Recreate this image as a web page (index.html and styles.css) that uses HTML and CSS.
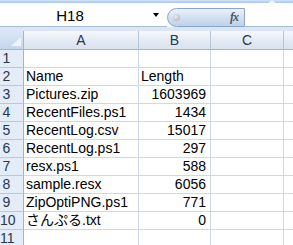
FILE: index.html
```html
<!DOCTYPE html>
<html>
<head>
<meta charset="utf-8">
<link rel="stylesheet" href="styles.css">
</head>
<body>
<div class="app">
  <div class="topband"><span class="notch"></span></div>
  <div class="fbar">
    <div class="namebox">
      <span class="nb-text">H18</span>
      <span class="nb-arrow"></span>
    </div>
    <div class="pill">
      <span class="knob"></span>
      <span class="fx">fx</span>
    </div>
    <div class="finput"></div>
  </div>
  <div class="gap"></div>
  <div class="sheet">
    <div class="corner"><span class="tri"></span></div>
    <div class="colhdr">A</div>
    <div class="colhdr">B</div>
    <div class="colhdr">C</div>
    <div class="colhdr last"></div>

    <div class="rowhdr">1</div><div class="cell"></div><div class="cell"></div><div class="cell"></div><div class="cell last"></div>
    <div class="rowhdr">2</div><div class="cell">Name</div><div class="cell">Length</div><div class="cell"></div><div class="cell last"></div>
    <div class="rowhdr">3</div><div class="cell">Pictures.zip</div><div class="cell num">1603969</div><div class="cell"></div><div class="cell last"></div>
    <div class="rowhdr">4</div><div class="cell">RecentFiles.ps1</div><div class="cell num">1434</div><div class="cell"></div><div class="cell last"></div>
    <div class="rowhdr">5</div><div class="cell">RecentLog.csv</div><div class="cell num">15017</div><div class="cell"></div><div class="cell last"></div>
    <div class="rowhdr">6</div><div class="cell">RecentLog.ps1</div><div class="cell num">297</div><div class="cell"></div><div class="cell last"></div>
    <div class="rowhdr">7</div><div class="cell">resx.ps1</div><div class="cell num">588</div><div class="cell"></div><div class="cell last"></div>
    <div class="rowhdr">8</div><div class="cell">sample.resx</div><div class="cell num">6056</div><div class="cell"></div><div class="cell last"></div>
    <div class="rowhdr">9</div><div class="cell">ZipOptiPNG.ps1</div><div class="cell num">771</div><div class="cell"></div><div class="cell last"></div>
    <div class="rowhdr">10</div><div class="cell">さんぷる.txt</div><div class="cell num">0</div><div class="cell"></div><div class="cell last"></div>
    <div class="rowhdr">11</div><div class="cell"></div><div class="cell"></div><div class="cell"></div><div class="cell last"></div>
  </div>
</div>
</body>
</html>
```
FILE: styles.css
```css
html, body {
  margin: 0;
  padding: 0;
  background: #ffffff;
  overflow: hidden;
}
.app {
  width: 293px;
  height: 245px;
  overflow: hidden;
  font-family: "Liberation Sans", "Noto Sans CJK JP", sans-serif;
  font-size: 14px;
  color: #000;
}
.topband {
  position: relative;
  height: 3px;
  background: linear-gradient(#d5e4f7, #a9c3e6);
}
.notch {
  position: absolute;
  left: 268px;
  top: 0;
  width: 0;
  height: 0;
  border-left: 4px solid transparent;
  border-right: 4px solid transparent;
  border-bottom: 3px solid #eef4fc;
}
.fbar {
  display: flex;
  height: 24px;
  background: #ffffff;
}
.namebox {
  width: 167px;
  display: flex;
  align-items: center;
  border-bottom: 1px solid #a3bcd8;
  box-sizing: border-box;
}
.nb-text {
  width: 140px;
  text-align: center;
  font-size: 15px;
  color: #000;
  padding-top: 1px;
}
.nb-arrow {
  margin-left: 13px;
  width: 0;
  height: 0;
  border-left: 3px solid transparent;
  border-right: 3px solid transparent;
  border-top: 4px solid #000;
  margin-top: 1px;
}
.pill {
  width: 78px;
  height: 19px;
  margin-top: 5px;
  box-sizing: border-box;
  border: 1px solid #8aa5c9;
  border-radius: 10px 0 0 10px;
  background: linear-gradient(#eaf1fa, #d3e0f2 50%, #bed1ea);
  display: flex;
  align-items: center;
  justify-content: space-between;
  padding: 0 6px 0 5px;
}
.knob {
  width: 7px;
  height: 7px;
  border-radius: 50%;
  background: radial-gradient(circle at 40% 40%, #eceef1, #a3a8ae);
}
.fx {
  font-family: "Liberation Serif", serif;
  font-style: italic;
  font-weight: bold;
  font-size: 12px;
  color: #4e5866;
  letter-spacing: -1px;
}
.finput {
  flex: 1;
  border-bottom: 1px solid #a3bcd8;
  box-sizing: border-box;
}
.gap {
  height: 4px;
  background: #dbe5f3;
}
.sheet {
  display: grid;
  grid-template-columns: 24px 115px 72px 73px 1fr;
  grid-template-rows: 19px;
  grid-auto-rows: 18px;
}
.corner {
  position: relative;
  background: linear-gradient(#dbe7f6, #c4d6ee);
  border-right: 1px solid #9eb6ce;
  border-bottom: 1px solid #9eb6ce;
}
.tri {
  position: absolute;
  right: 2px;
  bottom: 3px;
  width: 0;
  height: 0;
  border-left: 10px solid transparent;
  border-bottom: 9px solid #f1f3f7;
}
.colhdr {
  background: linear-gradient(#f6f8fc, #e5ebf4 50%, #d9e2ef);
  border-right: 1px solid #b3c6dc;
  border-bottom: 1px solid #9eb6ce;
  text-align: center;
  line-height: 18px;
  color: #27384f;
  font-size: 14px;
}
.colhdr.last {
  border-right: 0;
}
.rowhdr {
  background: #e4ecf7;
  border-right: 1px solid #9eb6ce;
  border-bottom: 1px solid #b9c9dd;
  text-align: center;
  padding-right: 10px;
  line-height: 17px;
  color: #27384f;
  font-size: 14px;
}
.cell {
  border-right: 1px solid #d0d7e5;
  border-bottom: 1px solid #d0d7e5;
  padding: 0 2px;
  line-height: 17px;
  white-space: nowrap;
  overflow: hidden;
}
.cell.num {
  text-align: right;
  padding-right: 4px;
}
.cell.last {
  border-right: 0;
}
```
